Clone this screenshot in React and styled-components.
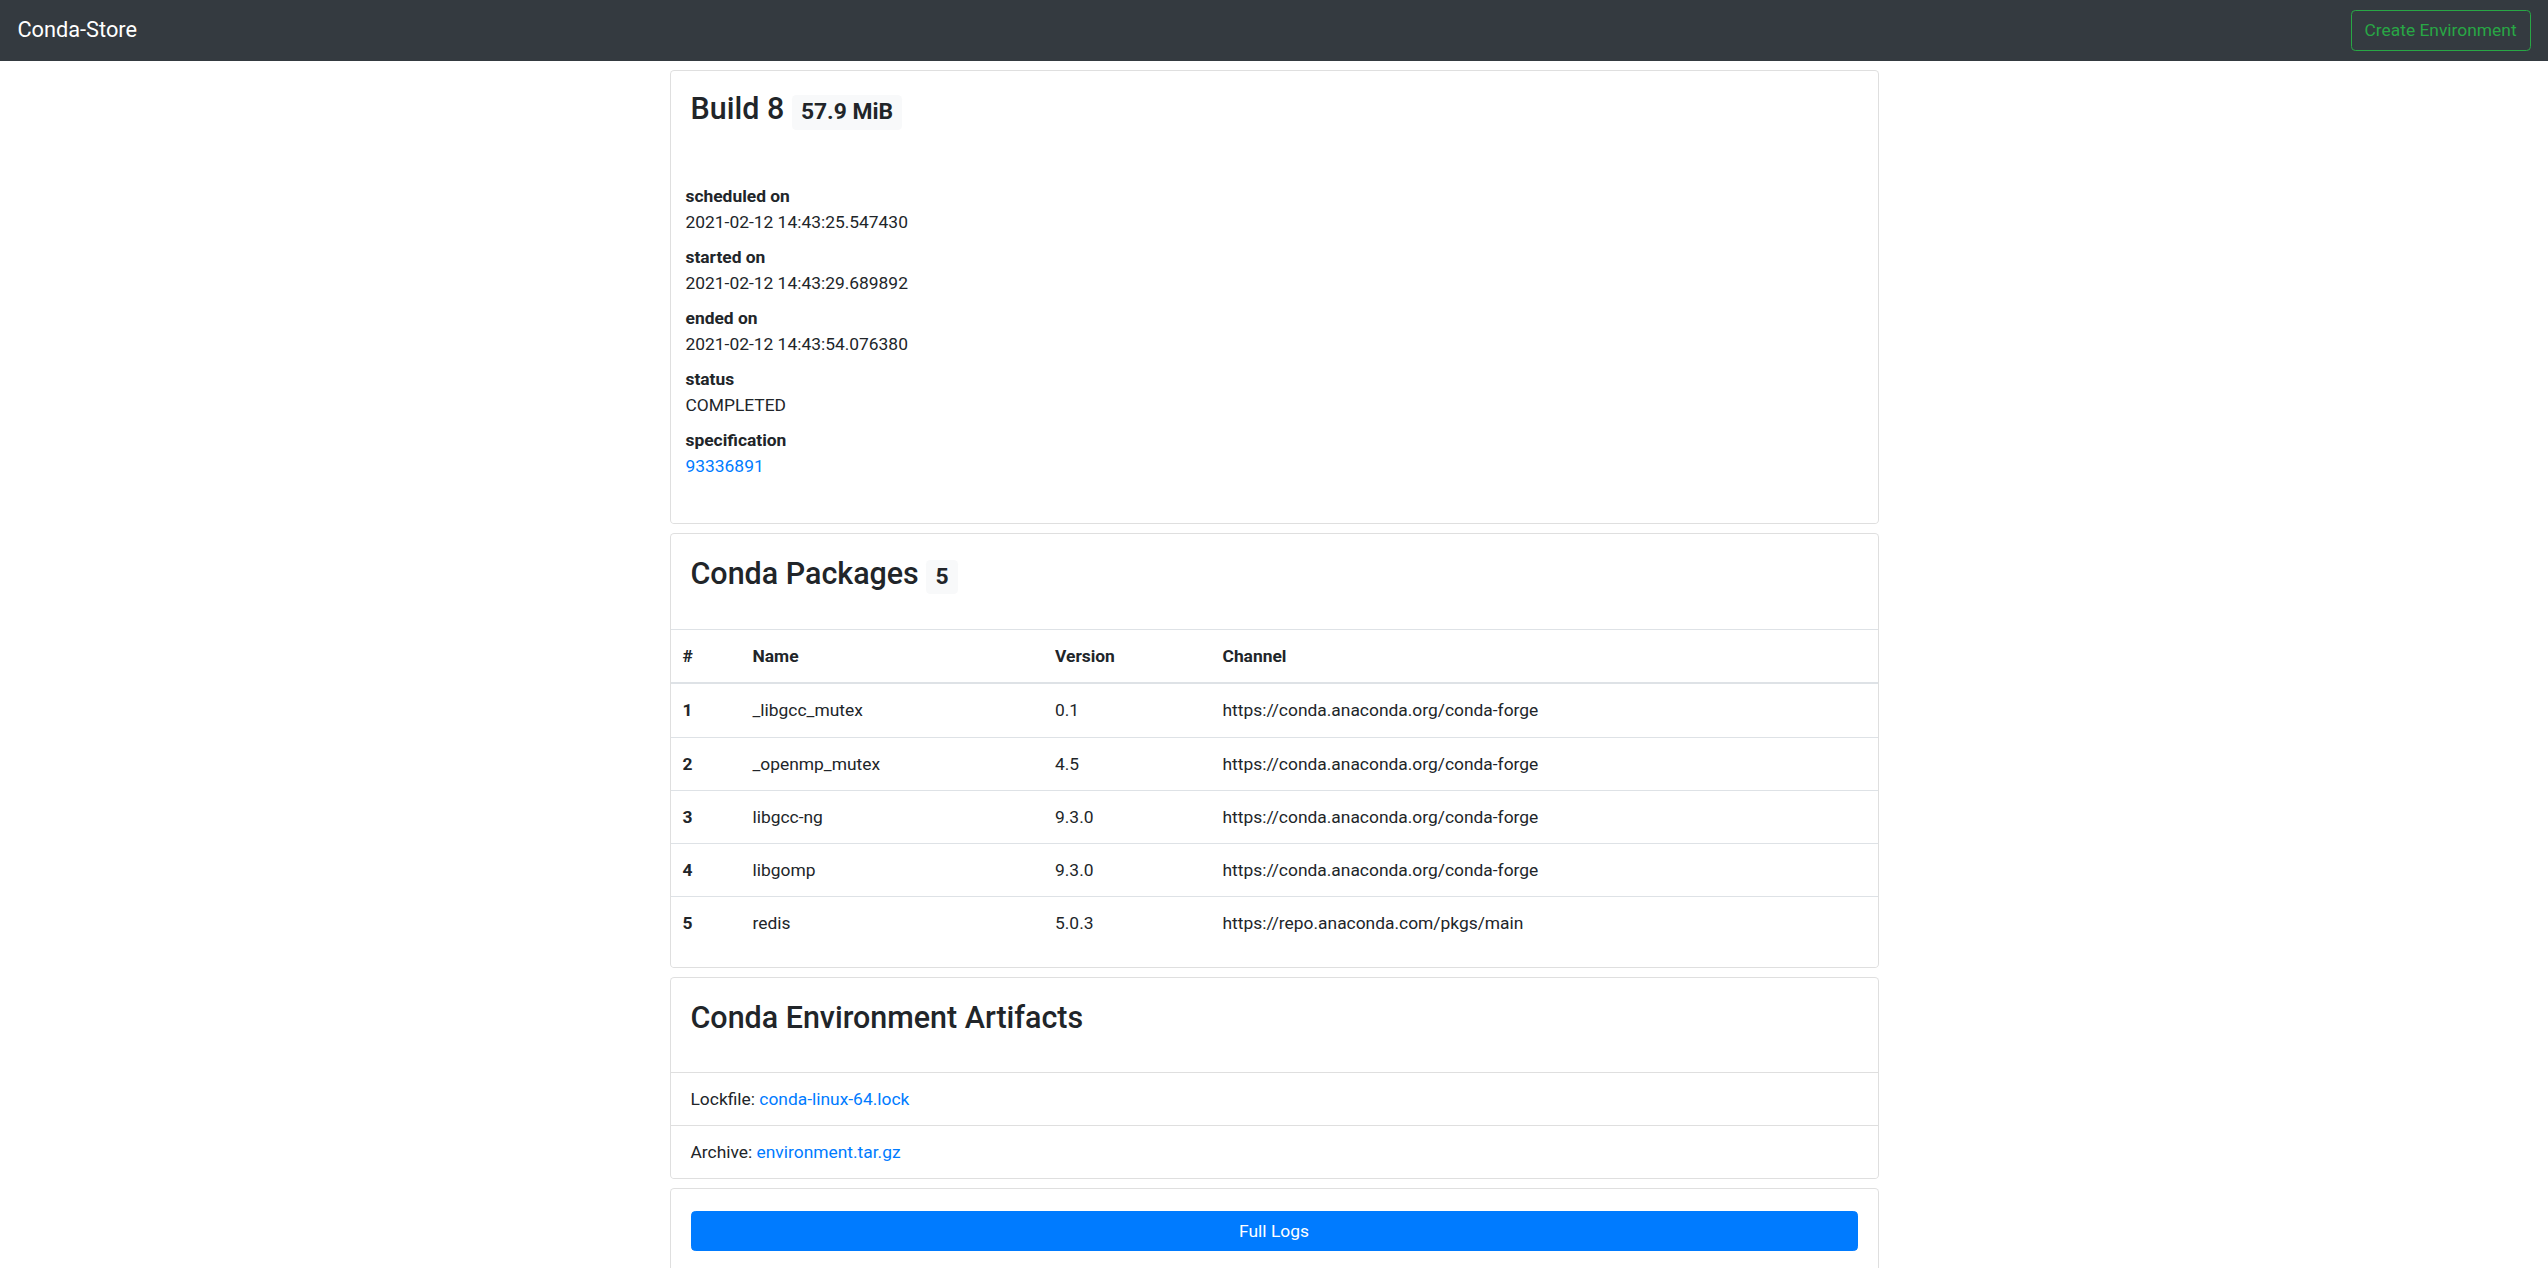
import React from "react";
import styled, { createGlobalStyle } from "styled-components";

const GlobalStyle = createGlobalStyle`
  * {
    box-sizing: border-box;
  }
  html,
  body {
    margin: 0;
    padding: 0;
    background: #fff;
  }
  body {
    font-family: Roboto, "Liberation Sans", sans-serif;
    font-size: 17.4px;
    line-height: 26.1px;
    color: #212529;
  }
`;

const Navbar = styled.nav`
  display: flex;
  justify-content: space-between;
  align-items: center;
  height: 61px;
  padding: 8.7px 17.4px;
  background-color: #343a40;
`;

const Brand = styled.a`
  font-size: 21.75px;
  line-height: 32.6px;
  padding: 5.4px 0;
  color: #fff;
  text-decoration: none;
`;

const OutlineButton = styled.button`
  font-family: inherit;
  font-size: 17.4px;
  line-height: 26.1px;
  padding: 6.1px 13px;
  color: #28a745;
  background: transparent;
  border: 1px solid #28a745;
  border-radius: 4.35px;
  cursor: pointer;
`;

const Main = styled.main`
  width: 1209px;
  margin: 0 auto;
  padding-top: 9px;
  display: flex;
  flex-direction: column;
  gap: 9px;
`;

const Card = styled.section`
  background: #fff;
  border: 1px solid rgba(0, 0, 0, 0.125);
  border-radius: 4.35px;
`;

const CardHead = styled.div`
  padding: ${(p) => p.$top}px 20px ${(p) => p.$bottom}px;
`;

const Title = styled.h3`
  margin: 0;
  font-size: 30.45px;
  font-weight: 500;
  line-height: 1.2;
`;

const Badge = styled.span`
  display: inline-block;
  font-size: 75%;
  font-weight: 700;
  line-height: 1;
  padding: 0.25em 0.4em;
  border-radius: 4.35px;
  background-color: #f8f9fa;
  color: #212529;
  vertical-align: baseline;
`;

const Details = styled.dl`
  margin: 53.5px 0 0;
  padding: 0 15px 35.5px;
`;

const Term = styled.dt`
  font-weight: 700;
`;

const Value = styled.dd`
  margin: 0 0 8.7px;
`;

const Link = styled.a`
  color: #007bff;
  text-decoration: none;
`;

const Table = styled.table`
  width: 100%;
  border-collapse: collapse;
  table-layout: fixed;
  margin-bottom: 17.4px;
`;

const Col = styled.col`
  width: ${(p) => p.$w};
`;

const HeadCell = styled.th`
  text-align: left;
  font-weight: 700;
  padding: 13.05px 12px;
  border-top: 1px solid #dee2e6;
  border-bottom: 2px solid #dee2e6;
  vertical-align: bottom;
`;

const Cell = styled.td`
  padding: 13.05px 12px;
  border-top: 1px solid #dee2e6;
  font-weight: ${(p) => (p.$bold ? 700 : 400)};
  vertical-align: top;
`;

const List = styled.ul`
  list-style: none;
  margin: 0;
  padding: 0;
`;

const ListItem = styled.li`
  padding: 13.05px 20px;
  border-top: 1px solid rgba(0, 0, 0, 0.125);
`;

const CardBody = styled.div`
  padding: 21.75px 20px;
`;

const BlockButton = styled.button`
  display: block;
  width: 100%;
  font-family: inherit;
  font-size: 17.4px;
  line-height: 26.1px;
  padding: 6.1px 13px;
  color: #fff;
  background-color: #007bff;
  border: 1px solid #007bff;
  border-radius: 4.35px;
  cursor: pointer;
`;

const build = [
  ["scheduled on", "2021-02-12 14:43:25.547430"],
  ["started on", "2021-02-12 14:43:29.689892"],
  ["ended on", "2021-02-12 14:43:54.076380"],
  ["status", "COMPLETED"],
];

const packages = [
  ["_libgcc_mutex", "0.1", "https://conda.anaconda.org/conda-forge"],
  ["_openmp_mutex", "4.5", "https://conda.anaconda.org/conda-forge"],
  ["libgcc-ng", "9.3.0", "https://conda.anaconda.org/conda-forge"],
  ["libgomp", "9.3.0", "https://conda.anaconda.org/conda-forge"],
  ["redis", "5.0.3", "https://repo.anaconda.com/pkgs/main"],
];

export default function App() {
  return (
    <>
      <GlobalStyle />
      <Navbar>
        <Brand href="#">Conda-Store</Brand>
        <OutlineButton>Create Environment</OutlineButton>
      </Navbar>
      <Main>
        <Card>
          <CardHead $top={20} $bottom={0}>
            <Title>
              Build 8 <Badge>57.9 MiB</Badge>
            </Title>
          </CardHead>
          <Details>
            {build.map(([k, v]) => (
              <React.Fragment key={k}>
                <Term>{k}</Term>
                <Value>{v}</Value>
              </React.Fragment>
            ))}
            <Term>specification</Term>
            <Value>
              <Link href="#">93336891</Link>
            </Value>
          </Details>
        </Card>

        <Card>
          <CardHead $top={22} $bottom={34.7}>
            <Title>
              Conda Packages <Badge>5</Badge>
            </Title>
          </CardHead>
          <Table>
            <colgroup>
              <Col $w="70px" />
              <Col $w="302.5px" />
              <Col $w="167.5px" />
              <Col $w="auto" />
            </colgroup>
            <thead>
              <tr>
                <HeadCell>#</HeadCell>
                <HeadCell>Name</HeadCell>
                <HeadCell>Version</HeadCell>
                <HeadCell>Channel</HeadCell>
              </tr>
            </thead>
            <tbody>
              {packages.map(([name, version, channel], i) => (
                <tr key={name}>
                  <Cell $bold>{i + 1}</Cell>
                  <Cell>{name}</Cell>
                  <Cell>{version}</Cell>
                  <Cell>{channel}</Cell>
                </tr>
              ))}
            </tbody>
          </Table>
        </Card>

        <Card>
          <CardHead $top={22} $bottom={35.4}>
            <Title>Conda Environment Artifacts</Title>
          </CardHead>
          <List>
            <ListItem>
              Lockfile: <Link href="#">conda-linux-64.lock</Link>
            </ListItem>
            <ListItem>
              Archive: <Link href="#">environment.tar.gz</Link>
            </ListItem>
          </List>
        </Card>

        <Card>
          <CardBody>
            <BlockButton>Full Logs</BlockButton>
          </CardBody>
        </Card>
      </Main>
    </>
  );
}
